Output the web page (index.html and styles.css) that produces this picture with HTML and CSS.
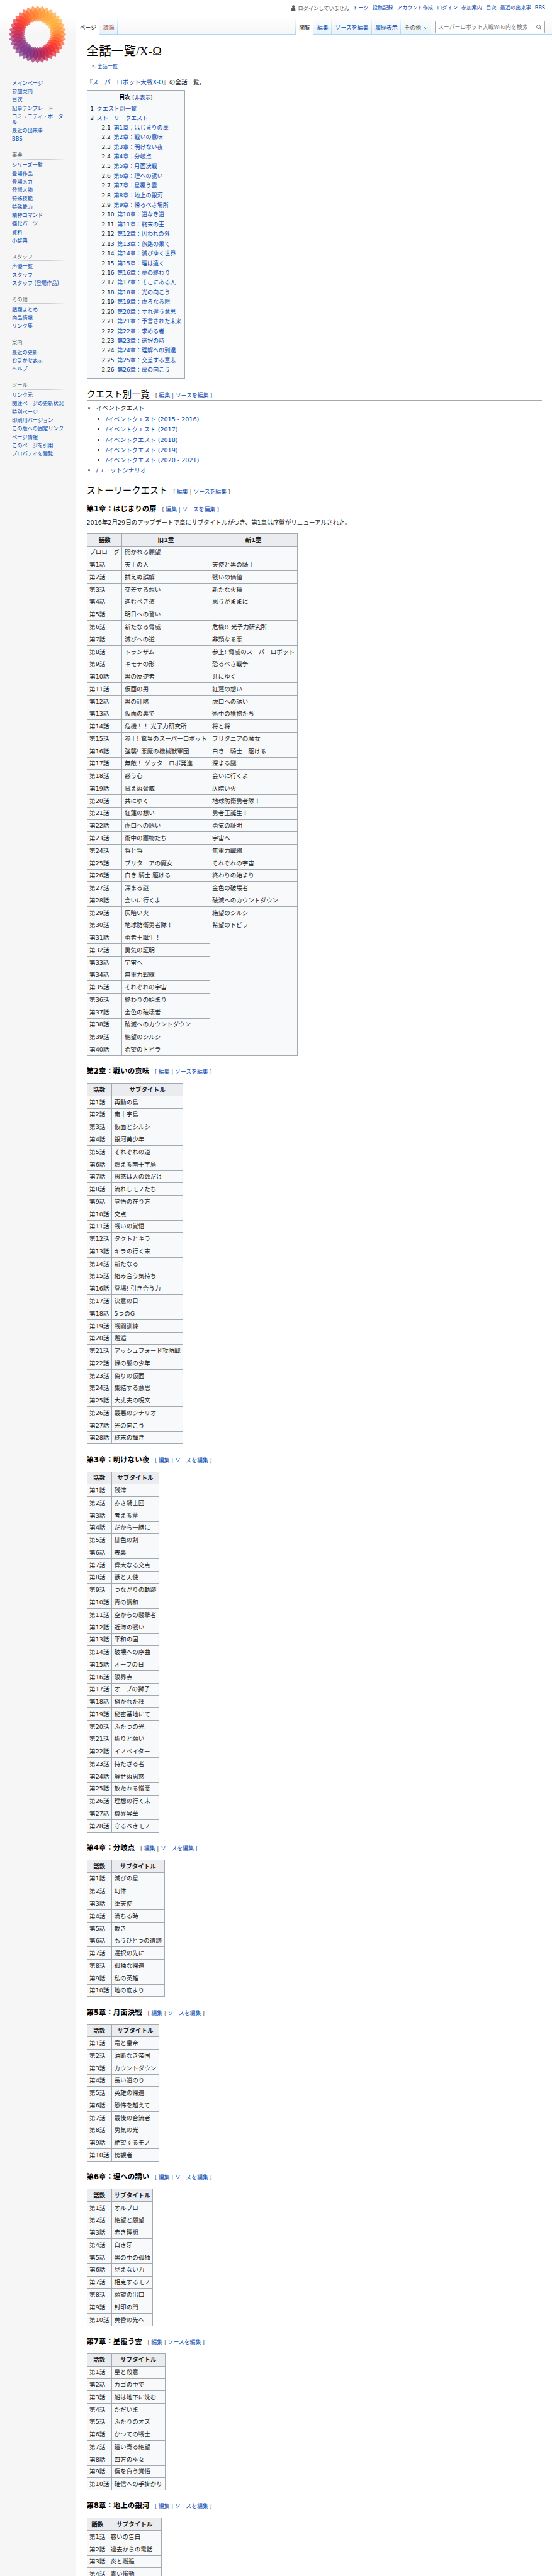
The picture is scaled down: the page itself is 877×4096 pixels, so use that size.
FILE: index.html
```html
<!DOCTYPE html>
<html lang="ja">
<head>
  <meta charset="UTF-8">
  <title>全話一覧/X-Ω</title>
  <link rel="stylesheet" href="styles.css">
</head>
<body>
<div class="page">

  <aside class="panel">
    <svg class="logo" viewBox="-80 -80 160 160">
      <defs><path id="petal" d="M0,-29 C13,-41 13,-55 0,-67 C-13,-55 -13,-41 0,-29Z"/></defs>
      <use href="#petal" transform="rotate(0)" fill="#ff8a2b"/>
      <use href="#petal" transform="rotate(10)" fill="#ff902d"/>
      <use href="#petal" transform="rotate(20)" fill="#ff982f"/>
      <use href="#petal" transform="rotate(30)" fill="#ffa032"/>
      <use href="#petal" transform="rotate(40)" fill="#ffa836"/>
      <use href="#petal" transform="rotate(50)" fill="#ffb03a"/>
      <use href="#petal" transform="rotate(60)" fill="#ffac38"/>
      <use href="#petal" transform="rotate(70)" fill="#ffa234"/>
      <use href="#petal" transform="rotate(80)" fill="#ff9630"/>
      <use href="#petal" transform="rotate(90)" fill="#ff842c"/>
      <use href="#petal" transform="rotate(100)" fill="#ff6c28"/>
      <use href="#petal" transform="rotate(110)" fill="#ff5224"/>
      <use href="#petal" transform="rotate(120)" fill="#ff3c22"/>
      <use href="#petal" transform="rotate(130)" fill="#f52c28"/>
      <use href="#petal" transform="rotate(140)" fill="#e8222e"/>
      <use href="#petal" transform="rotate(150)" fill="#d81c38"/>
      <use href="#petal" transform="rotate(160)" fill="#c41a44"/>
      <use href="#petal" transform="rotate(170)" fill="#b01a50"/>
      <use href="#petal" transform="rotate(180)" fill="#a01c5c"/>
      <use href="#petal" transform="rotate(190)" fill="#8f2068"/>
      <use href="#petal" transform="rotate(200)" fill="#802674"/>
      <use href="#petal" transform="rotate(210)" fill="#762c80"/>
      <use href="#petal" transform="rotate(220)" fill="#782e88"/>
      <use href="#petal" transform="rotate(230)" fill="#7e3088"/>
      <use href="#petal" transform="rotate(240)" fill="#8a3084"/>
      <use href="#petal" transform="rotate(250)" fill="#982e78"/>
      <use href="#petal" transform="rotate(260)" fill="#a62a68"/>
      <use href="#petal" transform="rotate(270)" fill="#b8265a"/>
      <use href="#petal" transform="rotate(280)" fill="#cc244a"/>
      <use href="#petal" transform="rotate(290)" fill="#de2438"/>
      <use href="#petal" transform="rotate(300)" fill="#ee2a2c"/>
      <use href="#petal" transform="rotate(310)" fill="#f83424"/>
      <use href="#petal" transform="rotate(320)" fill="#ff4222"/>
      <use href="#petal" transform="rotate(330)" fill="#ff5424"/>
      <use href="#petal" transform="rotate(340)" fill="#ff6826"/>
      <use href="#petal" transform="rotate(350)" fill="#ff7c28"/>
    </svg>

    <ul class="portal first">
      <li><a href="#">メインページ</a></li>
      <li><a href="#">参加案内</a></li>
      <li><a href="#">目次</a></li>
      <li><a href="#">記事テンプレート</a></li>
      <li><a href="#">コミュニティ・ポータル</a></li>
      <li><a href="#">最近の出来事</a></li>
      <li><a href="#">BBS</a></li>
    </ul>

    <h3 class="portal-title">事典</h3>
    <ul class="portal">
      <li><a href="#">シリーズ一覧</a></li>
      <li><a href="#">登場作品</a></li>
      <li><a href="#">登場メカ</a></li>
      <li><a href="#">登場人物</a></li>
      <li><a href="#">特殊技能</a></li>
      <li><a href="#">特殊能力</a></li>
      <li><a href="#">精神コマンド</a></li>
      <li><a href="#">強化パーツ</a></li>
      <li><a href="#">資料</a></li>
      <li><a href="#">小辞典</a></li>
    </ul>

    <h3 class="portal-title">スタッフ</h3>
    <ul class="portal">
      <li><a href="#">声優一覧</a></li>
      <li><a href="#">スタッフ</a></li>
      <li><a href="#">スタッフ (登場作品)</a></li>
    </ul>

    <h3 class="portal-title">その他</h3>
    <ul class="portal">
      <li><a href="#">話題まとめ</a></li>
      <li><a href="#">商品情報</a></li>
      <li><a href="#">リンク集</a></li>
    </ul>

    <h3 class="portal-title">案内</h3>
    <ul class="portal">
      <li><a href="#">最近の更新</a></li>
      <li><a href="#">おまかせ表示</a></li>
      <li><a href="#">ヘルプ</a></li>
    </ul>

    <h3 class="portal-title">ツール</h3>
    <ul class="portal">
      <li><a href="#">リンク元</a></li>
      <li><a href="#">関連ページの更新状況</a></li>
      <li><a href="#">特別ページ</a></li>
      <li><a href="#">印刷用バージョン</a></li>
      <li><a href="#">この版への固定リンク</a></li>
      <li><a href="#">ページ情報</a></li>
      <li><a href="#">このページを引用</a></li>
      <li><a href="#">プロパティを閲覧</a></li>
    </ul>
  </aside>

  <div class="main">
    <header class="head">
      <ul class="personal">
        <li class="anon">
          <svg class="user-icon" viewBox="0 0 12 14"><circle cx="6" cy="3.4" r="3.2"/><path d="M1 14V9.5C1 8 2.5 7 4 7h4c1.500 0 3 1 3 2.500V14Z"/></svg>
          ログインしていません
        </li>
        <li><a href="#">トーク</a></li>
        <li><a href="#">投稿記録</a></li>
        <li><a href="#">アカウント作成</a></li>
        <li><a href="#">ログイン</a></li>
        <li><a href="#">参加案内</a></li>
        <li><a href="#">目次</a></li>
        <li><a href="#">最近の出来事</a></li>
        <li><a href="#">BBS</a></li>
      </ul>
      <nav class="tabs">
        <div class="tab-group">
          <span class="tab selected">ページ</span>
          <a class="tab new" href="#">議論</a>
        </div>
        <div class="tab-right">
          <div class="tab-group">
            <span class="tab selected">閲覧</span>
            <a class="tab" href="#">編集</a>
            <a class="tab" href="#">ソースを編集</a>
            <a class="tab" href="#">履歴表示</a>
            <span class="tab more">その他<svg class="chevron" viewBox="0 0 10 7"><path d="M1 1.500 5 5.500 9 1.500"/></svg></span>
          </div>
          <div class="search">
            <input type="search" placeholder="スーパーロボット大戦Wiki内を検索">
            <svg class="search-icon" viewBox="0 0 13 13"><circle cx="5.200" cy="5.200" r="4.300"/><path d="M8.200 8.400 12 12.500"/></svg>
          </div>
        </div>
      </nav>
    </header>

    <main class="content">
      <h1>全話一覧/X-Ω</h1>
      <div class="body-text">
        <div class="sub">&lt; <a href="#">全話一覧</a></div>
        <p>『<a href="#">スーパーロボット大戦X-Ω</a>』の全話一覧。</p>

        <div class="toc">
          <div class="toc-title"><b>目次</b> <span class="toc-toggle">[<a href="#">非表示</a>]</span></div>
          <ul>
            <li><a href="#"><span class="toc-num">1</span>クエスト別一覧</a></li>
            <li><a href="#"><span class="toc-num">2</span>ストーリークエスト</a>
              <ul>
                <li><a href="#"><span class="toc-num">2.1</span>第1章&#xFF1A;はじまりの扉</a></li>
                <li><a href="#"><span class="toc-num">2.2</span>第2章&#xFF1A;戦いの意味</a></li>
                <li><a href="#"><span class="toc-num">2.3</span>第3章&#xFF1A;明けない夜</a></li>
                <li><a href="#"><span class="toc-num">2.4</span>第4章&#xFF1A;分岐点</a></li>
                <li><a href="#"><span class="toc-num">2.5</span>第5章&#xFF1A;月面決戦</a></li>
                <li><a href="#"><span class="toc-num">2.6</span>第6章&#xFF1A;理への誘い</a></li>
                <li><a href="#"><span class="toc-num">2.7</span>第7章&#xFF1A;星覆う雲</a></li>
                <li><a href="#"><span class="toc-num">2.8</span>第8章&#xFF1A;地上の銀河</a></li>
                <li><a href="#"><span class="toc-num">2.9</span>第9章&#xFF1A;帰るべき場所</a></li>
                <li><a href="#"><span class="toc-num">2.10</span>第10章&#xFF1A;道なき道</a></li>
                <li><a href="#"><span class="toc-num">2.11</span>第11章&#xFF1A;終末の王</a></li>
                <li><a href="#"><span class="toc-num">2.12</span>第12章&#xFF1A;囚われの外</a></li>
                <li><a href="#"><span class="toc-num">2.13</span>第13章&#xFF1A;旅路の果て</a></li>
                <li><a href="#"><span class="toc-num">2.14</span>第14章&#xFF1A;滅びゆく世界</a></li>
                <li><a href="#"><span class="toc-num">2.15</span>第15章&#xFF1A;理は遠く</a></li>
                <li><a href="#"><span class="toc-num">2.16</span>第16章&#xFF1A;夢の終わり</a></li>
                <li><a href="#"><span class="toc-num">2.17</span>第17章&#xFF1A;そこにある人</a></li>
                <li><a href="#"><span class="toc-num">2.18</span>第18章&#xFF1A;光の向こう</a></li>
                <li><a href="#"><span class="toc-num">2.19</span>第19章&#xFF1A;虚ろなる陰</a></li>
                <li><a href="#"><span class="toc-num">2.20</span>第20章&#xFF1A;すれ違う意思</a></li>
                <li><a href="#"><span class="toc-num">2.21</span>第21章&#xFF1A;予言された未来</a></li>
                <li><a href="#"><span class="toc-num">2.22</span>第22章&#xFF1A;求める者</a></li>
                <li><a href="#"><span class="toc-num">2.23</span>第23章&#xFF1A;選択の時</a></li>
                <li><a href="#"><span class="toc-num">2.24</span>第24章&#xFF1A;理解への到達</a></li>
                <li><a href="#"><span class="toc-num">2.25</span>第25章&#xFF1A;交差する意志</a></li>
                <li><a href="#"><span class="toc-num">2.26</span>第26章&#xFF1A;扉の向こう</a></li>
              </ul>
            </li>
          </ul>
        </div>

        <h2>クエスト別一覧<span class="edit"><span class="bracket">[</span><a href="#">編集</a><span class="divider"> | </span><a href="#">ソースを編集</a><span class="bracket close">]</span></span></h2>
        <ul class="list">
          <li>イベントクエスト
            <ul class="list">
              <li><a href="#">/イベントクエスト (2015 - 2016)</a></li>
              <li><a href="#">/イベントクエスト (2017)</a></li>
              <li><a href="#">/イベントクエスト (2018)</a></li>
              <li><a href="#">/イベントクエスト (2019)</a></li>
              <li><a href="#">/イベントクエスト (2020 - 2021)</a></li>
            </ul>
          </li>
          <li><a href="#">/ユニットシナリオ</a></li>
        </ul>

        <h2>ストーリークエスト<span class="edit"><span class="bracket">[</span><a href="#">編集</a><span class="divider"> | </span><a href="#">ソースを編集</a><span class="bracket close">]</span></span></h2>

        <h3>第1章&#xFF1A;はじまりの扉<span class="edit"><span class="bracket">[</span><a href="#">編集</a><span class="divider"> | </span><a href="#">ソースを編集</a><span class="bracket close">]</span></span></h3>
        <p>2016年2月29日のアップデートで章にサブタイトルがつき、第1章は序盤がリニューアルされた。</p>
        <table class="wikitable">
          <tr><th>話数</th><th>旧1章</th><th>新1章</th></tr>
          <tr><td>プロローグ</td><td colspan="2">開かれる願望</td></tr>
          <tr><td>第1話</td><td>天上の人</td><td>天使と黒の騎士</td></tr>
          <tr><td>第2話</td><td>拭えぬ誤解</td><td>戦いの価値</td></tr>
          <tr><td>第3話</td><td>交差する想い</td><td>新たな火種</td></tr>
          <tr><td>第4話</td><td>進むべき道</td><td>思うがままに</td></tr>
          <tr><td>第5話</td><td colspan="2">明日への誓い</td></tr>
          <tr><td>第6話</td><td>新たなる脅威</td><td>危機!! 光子力研究所</td></tr>
          <tr><td>第7話</td><td>滅びへの道</td><td>非類なる悪</td></tr>
          <tr><td>第8話</td><td>トランザム</td><td>参上! 脅威のスーパーロボット</td></tr>
          <tr><td>第9話</td><td>キモチの形</td><td>恐るべき戦争</td></tr>
          <tr><td>第10話</td><td>黒の反逆者</td><td>共にゆく</td></tr>
          <tr><td>第11話</td><td>仮面の男</td><td>紅蓮の想い</td></tr>
          <tr><td>第12話</td><td>黒の計略</td><td>虎口への誘い</td></tr>
          <tr><td>第13話</td><td>仮面の裏で</td><td>術中の獲物たち</td></tr>
          <tr><td>第14話</td><td>危機&#xFF01;&#xFF01; 光子力研究所</td><td>将と将</td></tr>
          <tr><td>第15話</td><td>参上! 驚異のスーパーロボット</td><td>ブリタニアの魔女</td></tr>
          <tr><td>第16話</td><td>強襲! 悪魔の機械獣軍団</td><td>白き&#x3000;騎士&#x3000;駆ける</td></tr>
          <tr><td>第17話</td><td>無敵&#xFF01; ゲッターロボ発進</td><td>深まる謎</td></tr>
          <tr><td>第18話</td><td>惑う心</td><td>会いに行くよ</td></tr>
          <tr><td>第19話</td><td>拭えぬ脅威</td><td>仄暗い火</td></tr>
          <tr><td>第20話</td><td>共にゆく</td><td>地球防衛勇者隊&#xFF01;</td></tr>
          <tr><td>第21話</td><td>紅蓮の想い</td><td>勇者王誕生&#xFF01;</td></tr>
          <tr><td>第22話</td><td>虎口への誘い</td><td>勇気の証明</td></tr>
          <tr><td>第23話</td><td>術中の獲物たち</td><td>宇宙へ</td></tr>
          <tr><td>第24話</td><td>将と将</td><td>無重力戦線</td></tr>
          <tr><td>第25話</td><td>ブリタニアの魔女</td><td>それぞれの宇宙</td></tr>
          <tr><td>第26話</td><td>白き 騎士 駆ける</td><td>終わりの始まり</td></tr>
          <tr><td>第27話</td><td>深まる謎</td><td>金色の破壊者</td></tr>
          <tr><td>第28話</td><td>会いに行くよ</td><td>破滅へのカウントダウン</td></tr>
          <tr><td>第29話</td><td>仄暗い火</td><td>絶望のシルシ</td></tr>
          <tr><td>第30話</td><td>地球防衛勇者隊&#xFF01;</td><td>希望のトビラ</td></tr>
          <tr><td>第31話</td><td>勇者王誕生&#xFF01;</td><td rowspan="10">-</td></tr>
          <tr><td>第32話</td><td>勇気の証明</td></tr>
          <tr><td>第33話</td><td>宇宙へ</td></tr>
          <tr><td>第34話</td><td>無重力戦線</td></tr>
          <tr><td>第35話</td><td>それぞれの宇宙</td></tr>
          <tr><td>第36話</td><td>終わりの始まり</td></tr>
          <tr><td>第37話</td><td>金色の破壊者</td></tr>
          <tr><td>第38話</td><td>破滅へのカウントダウン</td></tr>
          <tr><td>第39話</td><td>絶望のシルシ</td></tr>
          <tr><td>第40話</td><td>希望のトビラ</td></tr>
        </table>

        <h3>第2章&#xFF1A;戦いの意味<span class="edit"><span class="bracket">[</span><a href="#">編集</a><span class="divider"> | </span><a href="#">ソースを編集</a><span class="bracket close">]</span></span></h3>
        <table class="wikitable">
          <tr><th>話数</th><th>サブタイトル</th></tr>
          <tr><td>第1話</td><td>再動の島</td></tr>
          <tr><td>第2話</td><td>南十字島</td></tr>
          <tr><td>第3話</td><td>仮面とシルシ</td></tr>
          <tr><td>第4話</td><td>銀河美少年</td></tr>
          <tr><td>第5話</td><td>それぞれの道</td></tr>
          <tr><td>第6話</td><td>燃える南十字島</td></tr>
          <tr><td>第7話</td><td>思惑は人の数だけ</td></tr>
          <tr><td>第8話</td><td>流れしモノたち</td></tr>
          <tr><td>第9話</td><td>覚悟の在り方</td></tr>
          <tr><td>第10話</td><td>交点</td></tr>
          <tr><td>第11話</td><td>戦いの覚悟</td></tr>
          <tr><td>第12話</td><td>タクトとキラ</td></tr>
          <tr><td>第13話</td><td>キラの行く末</td></tr>
          <tr><td>第14話</td><td>新たなる</td></tr>
          <tr><td>第15話</td><td>絡み合う気持ち</td></tr>
          <tr><td>第16話</td><td>登場! 引き合う力</td></tr>
          <tr><td>第17話</td><td>決意の日</td></tr>
          <tr><td>第18話</td><td>5つのG</td></tr>
          <tr><td>第19話</td><td>戦闘訓練</td></tr>
          <tr><td>第20話</td><td>邂逅</td></tr>
          <tr><td>第21話</td><td>アッシュフォード攻防戦</td></tr>
          <tr><td>第22話</td><td>緑の髪の少年</td></tr>
          <tr><td>第23話</td><td>偽りの仮面</td></tr>
          <tr><td>第24話</td><td>集結する意思</td></tr>
          <tr><td>第25話</td><td>大丈夫の呪文</td></tr>
          <tr><td>第26話</td><td>最悪のシナリオ</td></tr>
          <tr><td>第27話</td><td>光の向こう</td></tr>
          <tr><td>第28話</td><td>終末の輝き</td></tr>
        </table>

        <h3>第3章&#xFF1A;明けない夜<span class="edit"><span class="bracket">[</span><a href="#">編集</a><span class="divider"> | </span><a href="#">ソースを編集</a><span class="bracket close">]</span></span></h3>
        <table class="wikitable">
          <tr><th>話数</th><th>サブタイトル</th></tr>
          <tr><td>第1話</td><td>残滓</td></tr>
          <tr><td>第2話</td><td>赤き騎士団</td></tr>
          <tr><td>第3話</td><td>考える葦</td></tr>
          <tr><td>第4話</td><td>だから一緒に</td></tr>
          <tr><td>第5話</td><td>緋色の剣</td></tr>
          <tr><td>第6話</td><td>表裏</td></tr>
          <tr><td>第7話</td><td>偉大なる交点</td></tr>
          <tr><td>第8話</td><td>獣と天使</td></tr>
          <tr><td>第9話</td><td>つながりの軌跡</td></tr>
          <tr><td>第10話</td><td>青の調和</td></tr>
          <tr><td>第11話</td><td>空からの襲撃者</td></tr>
          <tr><td>第12話</td><td>近海の戦い</td></tr>
          <tr><td>第13話</td><td>平和の国</td></tr>
          <tr><td>第14話</td><td>破壊への序曲</td></tr>
          <tr><td>第15話</td><td>オーブの日</td></tr>
          <tr><td>第16話</td><td>限界点</td></tr>
          <tr><td>第17話</td><td>オーブの獅子</td></tr>
          <tr><td>第18話</td><td>播かれた種</td></tr>
          <tr><td>第19話</td><td>秘密基地にて</td></tr>
          <tr><td>第20話</td><td>ふたつの光</td></tr>
          <tr><td>第21話</td><td>祈りと願い</td></tr>
          <tr><td>第22話</td><td>イノベイター</td></tr>
          <tr><td>第23話</td><td>持たざる者</td></tr>
          <tr><td>第24話</td><td>解せぬ思惑</td></tr>
          <tr><td>第25話</td><td>放たれる憎悪</td></tr>
          <tr><td>第26話</td><td>理想の行く末</td></tr>
          <tr><td>第27話</td><td>機界昇華</td></tr>
          <tr><td>第28話</td><td>守るべきモノ</td></tr>
        </table>

        <h3>第4章&#xFF1A;分岐点<span class="edit"><span class="bracket">[</span><a href="#">編集</a><span class="divider"> | </span><a href="#">ソースを編集</a><span class="bracket close">]</span></span></h3>
        <table class="wikitable">
          <tr><th>話数</th><th>サブタイトル</th></tr>
          <tr><td>第1話</td><td>滅びの星</td></tr>
          <tr><td>第2話</td><td>幻体</td></tr>
          <tr><td>第3話</td><td>堕天使</td></tr>
          <tr><td>第4話</td><td>満ちる時</td></tr>
          <tr><td>第5話</td><td>裁き</td></tr>
          <tr><td>第6話</td><td>もうひとつの遺跡</td></tr>
          <tr><td>第7話</td><td>選択の先に</td></tr>
          <tr><td>第8話</td><td>孤独な帰還</td></tr>
          <tr><td>第9話</td><td>私の英雄</td></tr>
          <tr><td>第10話</td><td>地の底より</td></tr>
        </table>

        <h3>第5章&#xFF1A;月面決戦<span class="edit"><span class="bracket">[</span><a href="#">編集</a><span class="divider"> | </span><a href="#">ソースを編集</a><span class="bracket close">]</span></span></h3>
        <table class="wikitable">
          <tr><th>話数</th><th>サブタイトル</th></tr>
          <tr><td>第1話</td><td>竜と皇帝</td></tr>
          <tr><td>第2話</td><td>油断なき帝国</td></tr>
          <tr><td>第3話</td><td>カウントダウン</td></tr>
          <tr><td>第4話</td><td>長い道のり</td></tr>
          <tr><td>第5話</td><td>英雄の帰還</td></tr>
          <tr><td>第6話</td><td>恐怖を越えて</td></tr>
          <tr><td>第7話</td><td>最後の合流者</td></tr>
          <tr><td>第8話</td><td>勇気の光</td></tr>
          <tr><td>第9話</td><td>絶望するモノ</td></tr>
          <tr><td>第10話</td><td>傍観者</td></tr>
        </table>

        <h3>第6章&#xFF1A;理への誘い<span class="edit"><span class="bracket">[</span><a href="#">編集</a><span class="divider"> | </span><a href="#">ソースを編集</a><span class="bracket close">]</span></span></h3>
        <table class="wikitable">
          <tr><th>話数</th><th>サブタイトル</th></tr>
          <tr><td>第1話</td><td>オルブロ</td></tr>
          <tr><td>第2話</td><td>絶望と願望</td></tr>
          <tr><td>第3話</td><td>赤き理想</td></tr>
          <tr><td>第4話</td><td>白き牙</td></tr>
          <tr><td>第5話</td><td>黒の中の孤独</td></tr>
          <tr><td>第6話</td><td>見えない力</td></tr>
          <tr><td>第7話</td><td>相克するモノ</td></tr>
          <tr><td>第8話</td><td>願望の出口</td></tr>
          <tr><td>第9話</td><td>封印の門</td></tr>
          <tr><td>第10話</td><td>黄昏の先へ</td></tr>
        </table>

        <h3>第7章&#xFF1A;星覆う雲<span class="edit"><span class="bracket">[</span><a href="#">編集</a><span class="divider"> | </span><a href="#">ソースを編集</a><span class="bracket close">]</span></span></h3>
        <table class="wikitable">
          <tr><th>話数</th><th>サブタイトル</th></tr>
          <tr><td>第1話</td><td>星と殺意</td></tr>
          <tr><td>第2話</td><td>カゴの中で</td></tr>
          <tr><td>第3話</td><td>船は地下に沈む</td></tr>
          <tr><td>第4話</td><td>ただいま</td></tr>
          <tr><td>第5話</td><td>ふたりのオズ</td></tr>
          <tr><td>第6話</td><td>かつての戦士</td></tr>
          <tr><td>第7話</td><td>這い寄る絶望</td></tr>
          <tr><td>第8話</td><td>四方の巫女</td></tr>
          <tr><td>第9話</td><td>傷を負う覚悟</td></tr>
          <tr><td>第10話</td><td>確信への手掛かり</td></tr>
        </table>

        <h3>第8章&#xFF1A;地上の銀河<span class="edit"><span class="bracket">[</span><a href="#">編集</a><span class="divider"> | </span><a href="#">ソースを編集</a><span class="bracket close">]</span></span></h3>
        <table class="wikitable">
          <tr><th>話数</th><th class="eight">サブタイトル</th></tr>
          <tr><td>第1話</td><td>惑いの告白</td></tr>
          <tr><td>第2話</td><td>過去からの電話</td></tr>
          <tr><td>第3話</td><td>炎と邂逅</td></tr>
          <tr><td>第4話</td><td>青い衝動</td></tr>
        </table>
      </div>
    </main>
  </div>

</div>
</body>
</html>
```

FILE: styles.css
```css
/* 1rem = 16px of the original layout, drawn at about 0.6827 */
html {
  font-size: 10.923px;
}
body {
  margin: 0;
  font-family: "DejaVu Sans", "Noto Sans CJK JP", sans-serif;
  color: #202122;
  background: #f6f6f6 linear-gradient(#fff 50%, #f6f6f6 100%) no-repeat;
  background-size: 100% 5rem;
}
a {
  color: #0645ad;
  text-decoration: none;
}
ul {
  list-style: none;
  margin: 0;
  padding: 0;
}

.page {
  display: grid;
  grid-template-columns: 11rem 1fr;
  height: 100vh;
  overflow: hidden;
}

/* sidebar */
.panel {
  padding: 0 1.25rem 0 1.75rem;
}
.logo {
  display: block;
  width: 10rem;
  height: 10rem;
  margin-left: -1.25rem;
}
.logo use {
  opacity: .68;
}
.portal {
  font-size: .75rem;
  line-height: 1.125;
}
.portal li {
  padding: .25em 0;
}
.portal.first {
  margin-top: 1.5rem;
}
.portal-title {
  margin: 1.144rem 0 .2rem;
  padding-bottom: .125rem;
  font-size: .75rem;
  font-weight: normal;
  line-height: 1.125rem;
  color: #54595d;
  background: linear-gradient(to right, transparent, #c8ccd1 33%, #c8ccd1 66%, transparent) bottom / 100% 1px no-repeat;
}

/* top bar */
.main {
  min-width: 0;
}
.head {
  display: flex;
  flex-direction: column;
  height: 4.9375rem;
}
.personal {
  display: flex;
  justify-content: flex-end;
  gap: .5625rem;
  padding: .75rem 1rem 0 0;
  font-size: .75rem;
  line-height: 1.1667;
}
.anon {
  color: #54595d;
}
.user-icon {
  width: 1em;
  height: 1.1em;
  margin-right: .15em;
  fill: #54595d;
  vertical-align: -.15em;
}
.tabs {
  display: flex;
  justify-content: space-between;
  position: relative;
  z-index: 1;
  height: 2.5rem;
  margin-top: auto;
  margin-bottom: -1px;
  font-size: .8125rem;
}
.tab-group {
  display: flex;
  padding-left: 1px;
  background: linear-gradient(transparent, #a7d7f9) left / 1px 100% no-repeat;
}
.tab {
  box-sizing: border-box;
  padding: .9375rem .5rem 0;
  line-height: 1.25rem;
  border-bottom: 1px solid #a7d7f9;
  background:
    linear-gradient(transparent, #a7d7f9) right / 1px 100% no-repeat,
    linear-gradient(#fff, #e8f2f8);
}
.tab.selected {
  color: #202122;
  border-bottom-color: #fff;
  background:
    linear-gradient(transparent, #a7d7f9) right / 1px 100% no-repeat,
    #fff;
}
.tab.new {
  color: #a55858;
}
.tab.more {
  color: #54595d;
}
.chevron {
  width: .625rem;
  height: .4375rem;
  margin-left: .35rem;
  fill: none;
  stroke: #54595d;
  stroke-width: 1.4;
}
.tab-right {
  display: flex;
  align-items: flex-start;
  height: 100%;
}
.tab-right .tab-group {
  height: 100%;
}
.search {
  position: relative;
  margin: .5rem 1rem 0 .5rem;
}
.search input {
  box-sizing: border-box;
  display: block;
  width: 16.0625rem;
  height: 1.8125rem;
  padding: 0 1.6rem 0 .4rem;
  font: inherit;
  color: #202122;
  background: #fff;
  border: 1px solid #a2a9b1;
  border-radius: 2px;
  outline: 0;
  -webkit-appearance: none;
}
.search input::placeholder {
  color: #72777d;
  opacity: 1;
}
.search-icon {
  position: absolute;
  top: .5rem;
  right: .5rem;
  width: .8125rem;
  height: .8125rem;
  fill: none;
  stroke: #54595d;
  stroke-width: 1.3;
}

/* article */
.content {
  min-height: 100%;
  padding: 1.25rem 1.5rem 1.5rem;
  background: #fff;
  border: 1px solid #a7d7f9;
  border-right: 0;
}
h1 {
  margin: 0 0 .45rem;
  padding-bottom: .11rem;
  font: normal 1.8rem/1.3 "Liberation Serif", "Noto Sans CJK JP", serif;
  color: #000;
  border-bottom: 1px solid #a2a9b1;
}
.body-text {
  font-size: .875rem;
  line-height: 1.6;
}
.sub {
  margin: 0 0 1.4em 1em;
  font-size: 84%;
  line-height: 1.26em;
  color: #54595d;
}
p {
  margin: .5em 0;
}

.toc {
  display: table;
  padding: .4375rem;
  font-size: 95%;
  background: #f8f9fa;
  border: 1px solid #a2a9b1;
}
.toc-title {
  text-align: center;
}
.toc-title b {
  color: #000;
}
.toc-toggle {
  font-size: 94%;
}
.toc ul {
  margin: .3em 0 .1em;
}
.toc ul ul {
  margin: 0 0 0 2em;
}
.toc li {
  margin-bottom: .1em;
}
.toc-num {
  padding-right: .5em;
  color: #202122;
}

.body-text h2 {
  margin: 1.07em 0 .25em;
  font-family: "Liberation Serif", "Noto Sans CJK JP", serif;
  font-size: 1.5em;
  font-weight: normal;
  line-height: 1.3;
  color: #000;
  border-bottom: 1px solid #a2a9b1;
}
.body-text h3 {
  margin: .3em 0 0;
  padding-top: .5em;
  font-size: 1.2em;
  font-weight: bold;
  line-height: 1.6;
  color: #000;
}
.edit {
  margin-left: 1em;
  font-family: "DejaVu Sans", "Noto Sans CJK JP", sans-serif;
  font-size: .8125rem;
  font-weight: normal;
  line-height: 1em;
  white-space: pre;
}
.bracket {
  margin-right: .25em;
  color: #54595d;
}
.bracket.close {
  margin: 0 0 0 .25em;
}
.divider {
  color: #54595d;
}

.list {
  margin: .3em 0 0 1.6em;
  list-style: disc;
}
.list li {
  margin-bottom: .1em;
}

.wikitable {
  margin: 1em 0;
  border-collapse: collapse;
  background: #f8f9fa;
}
.wikitable th, .wikitable td {
  padding: .1593rem .33rem;
  border: 1px solid #a2a9b1;
}
.wikitable th {
  text-align: center;
  background: #eaecf0;
}
.wikitable .eight {
  width: 8em;
}
```
